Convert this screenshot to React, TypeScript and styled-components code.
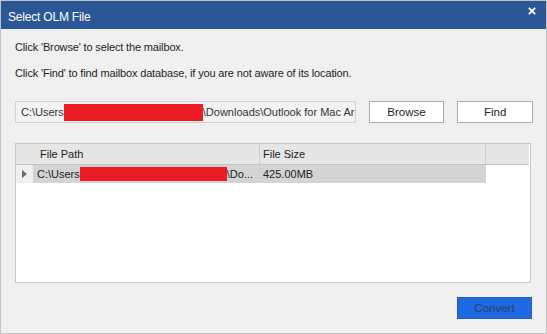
import React from "react";
import styled, { createGlobalStyle } from "styled-components";

const Global = createGlobalStyle`
  html, body { margin: 0; padding: 0; background: #ffffff; }
  * { box-sizing: border-box; }
`;

const Dialog = styled.div`
  width: 547px;
  height: 334px;
  border: 1px solid #c4c4c4;
  background: #f0f0f0;
  display: flex;
  flex-direction: column;
  font-family: "Liberation Sans", Arial, sans-serif;
  font-size: 11px;
  color: #1e1e1e;
  overflow: hidden;
`;

const TitleBar = styled.div`
  height: 28px;
  background: #2b5797;
  color: #ffffff;
  display: flex;
  align-items: center;
  justify-content: space-between;
  padding: 0 10px 0 7px;
  flex-shrink: 0;
`;

const Title = styled.span`
  font-size: 12px;
  letter-spacing: -0.2px;
  margin-top: 4px;
`;

const Close = styled.svg`
  width: 8px;
  height: 8px;
  align-self: flex-start;
  margin-top: 6px;
`;

const Body = styled.div`
  display: flex;
  flex-direction: column;
  padding: 10px 13px 0 14px;
`;

const Line = styled.div<{ $gap?: number }>`
  height: 16px;
  line-height: 16px;
  letter-spacing: -0.15px;
  margin-bottom: ${(p) => p.$gap ?? 0}px;
`;

const PathRow = styled.div`
  display: flex;
  align-items: center;
  gap: 13px;
  height: 22px;
  margin-bottom: 20px;
`;

const PathField = styled.div`
  width: 342px;
  height: 22px;
  border: 1px solid #d2d2d2;
  background: #f3f3f3;
  display: flex;
  align-items: center;
  padding-left: 5px;
  white-space: nowrap;
  overflow: hidden;
  color: #333;
`;

const Redact = styled.span<{ $w: number; $h: number }>`
  display: inline-block;
  width: ${(p) => p.$w}px;
  height: ${(p) => p.$h}px;
  background: #ed1c24;
  flex-shrink: 0;
`;

const Button = styled.button`
  width: 76px;
  height: 22px;
  border: 1px solid #adadad;
  background: #ffffff;
  font-family: inherit;
  font-size: 11.5px;
  color: #1e1e1e;
  padding: 0;
`;

const Grid = styled.div`
  width: 516px;
  height: 140px;
  border: 1px solid #c8c8c8;
  background: #ffffff;
  display: flex;
  flex-direction: column;
  margin-bottom: 14px;
`;

const HeaderRow = styled.div`
  display: flex;
  height: 21px;
  margin-right: 1px;
  background: #e6e6e6;
  border-bottom: 1px solid #c4c4c4;
  color: #222;
`;

const Cell = styled.div<{ $w: number; $line?: boolean; $pad?: number }>`
  width: ${(p) => p.$w}px;
  flex-shrink: 0;
  display: flex;
  align-items: center;
  padding-left: ${(p) => p.$pad ?? 7}px;
  border-right: ${(p) => (p.$line ? "1px solid #cfcfcf" : "none")};
  white-space: nowrap;
  overflow: hidden;
`;

const DataRow = styled.div`
  display: flex;
  height: 18px;
  color: #222;
`;

const RowHead = styled.div`
  width: 17px;
  background: #f0f0f0;
  display: flex;
  align-items: center;
  justify-content: center;
  flex-shrink: 0;
`;

const DataCell = styled(Cell)`
  background: #d4d4d4;
`;

const Footer = styled.div`
  display: flex;
  justify-content: flex-end;
  width: 517px;
`;

const Convert = styled.button`
  width: 75px;
  height: 22px;
  background: #1f6ae2;
  border: 1px solid #2a5fb8;
  color: #2c3d62;
  font-family: inherit;
  font-size: 11.5px;
  padding: 0;
`;

export default function App() {
  return (
    <>
      <Global />
      <Dialog>
        <TitleBar>
          <Title>Select OLM File</Title>
          <Close viewBox="0 0 8 8">
            <path d="M0.8 0.8L7.2 7.2M7.2 0.8L0.8 7.2" stroke="#fff" strokeWidth="1.8" />
          </Close>
        </TitleBar>
        <Body>
          <Line $gap={10}>Click 'Browse' to select the mailbox.</Line>
          <Line $gap={20}>Click 'Find' to find mailbox database, if you are not aware of its location.</Line>
          <PathRow>
            <PathField>
              C:\Users
              <Redact $w={139} $h={17} />
              \Downloads\Outlook for Mac Archive.olm
            </PathField>
            <Button>Browse</Button>
            <Button>Find</Button>
          </PathRow>
          <Grid>
            <HeaderRow>
              <Cell $w={17} $pad={0} />
              <Cell $w={227} $line>File Path</Cell>
              <Cell $w={226} $line $pad={3}>File Size</Cell>
              <Cell $w={43} />
            </HeaderRow>
            <DataRow>
              <RowHead>
                <svg width="5" height="8" viewBox="0 0 5 8">
                  <path d="M0 0L5 4L0 8Z" fill="#6a6a6a" />
                </svg>
              </RowHead>
              <DataCell $w={227} $pad={4}>
                C:\Users
                <Redact $w={147} $h={14} />
                \Do...
              </DataCell>
              <DataCell $w={226} $pad={3}>425.00MB</DataCell>
            </DataRow>
          </Grid>
          <Footer>
            <Convert>Convert</Convert>
          </Footer>
        </Body>
      </Dialog>
    </>
  );
}
